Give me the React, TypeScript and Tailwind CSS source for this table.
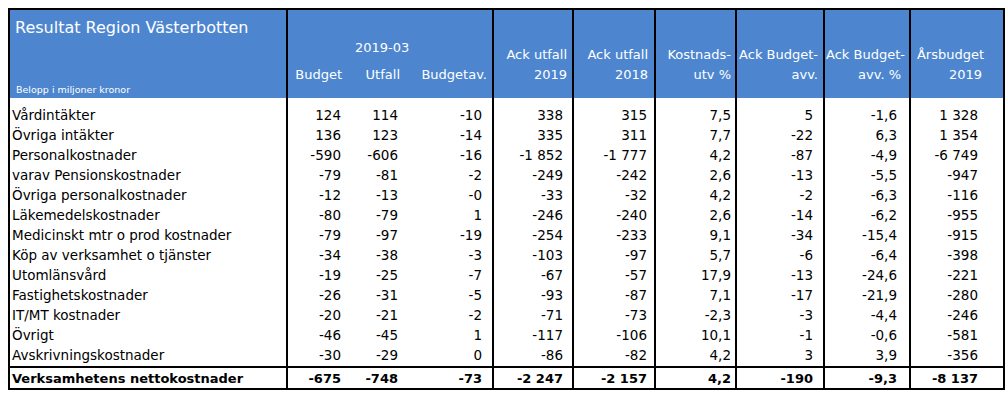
import React from "react";

const GRID =
  "grid grid-cols-[278px_58px_58px_90px_80px_82px_81px_88px_86px_92px]";

type Row = { label: string; v: string[] };

const rows: Row[] = [
  { label: "Vårdintäkter", v: ["124", "114", "-10", "338", "315", "7,5", "5", "-1,6", "1 328"] },
  { label: "Övriga intäkter", v: ["136", "123", "-14", "335", "311", "7,7", "-22", "6,3", "1 354"] },
  { label: "Personalkostnader", v: ["-590", "-606", "-16", "-1 852", "-1 777", "4,2", "-87", "-4,9", "-6 749"] },
  { label: "varav Pensionskostnader", v: ["-79", "-81", "-2", "-249", "-242", "2,6", "-13", "-5,5", "-947"] },
  { label: "Övriga personalkostnader", v: ["-12", "-13", "-0", "-33", "-32", "4,2", "-2", "-6,3", "-116"] },
  { label: "Läkemedelskostnader", v: ["-80", "-79", "1", "-246", "-240", "2,6", "-14", "-6,2", "-955"] },
  { label: "Medicinskt mtr o prod kostnader", v: ["-79", "-97", "-19", "-254", "-233", "9,1", "-34", "-15,4", "-915"] },
  { label: "Köp av verksamhet o tjänster", v: ["-34", "-38", "-3", "-103", "-97", "5,7", "-6", "-6,4", "-398"] },
  { label: "Utomlänsvård", v: ["-19", "-25", "-7", "-67", "-57", "17,9", "-13", "-24,6", "-221"] },
  { label: "Fastighetskostnader", v: ["-26", "-31", "-5", "-93", "-87", "7,1", "-17", "-21,9", "-280"] },
  { label: "IT/MT kostnader", v: ["-20", "-21", "-2", "-71", "-73", "-2,3", "-3", "-4,4", "-246"] },
  { label: "Övrigt", v: ["-46", "-45", "1", "-117", "-106", "10,1", "-1", "-0,6", "-581"] },
  { label: "Avskrivningskostnader", v: ["-30", "-29", "0", "-86", "-82", "4,2", "3", "3,9", "-356"] },
];

const total: Row = {
  label: "Verksamhetens nettokostnader",
  v: ["-675", "-748", "-73", "-2 247", "-2 157", "4,2", "-190", "-9,3", "-8 137"],
};

const cellCls = [
  "pr-[5px]",
  "pr-[6px]",
  "pr-[10px] border-r-2 border-black",
  "pr-[9px] border-r-2 border-black",
  "pr-[7px] border-r-2 border-black",
  "pr-[4px] border-r-2 border-black",
  "pr-[10px] border-r-2 border-black",
  "pr-[12px] border-r-2 border-black",
  "pr-[25px]",
];

const nb = (s: string) => s.replace(/ /g, "\u00a0");

function DataRow({ row, bold }: { row: Row; bold?: boolean }) {
  return (
    <div
      className={`${GRID} h-[20px] leading-[21px] ${bold ? "font-bold text-[13px]" : ""}`}
    >
      <div className="pl-[2px] border-r-2 border-black whitespace-nowrap">{row.label}</div>
      {row.v.map((v, i) => (
        <div key={i} className={`text-right whitespace-nowrap ${cellCls[i]}`}>
          {nb(v)}
        </div>
      ))}
    </div>
  );
}

function Spacer({ h }: { h: string }) {
  return (
    <div className={`${GRID} ${h}`}>
      <div className="border-r-2 border-black" />
      <div />
      <div />
      <div className="border-r-2 border-black" />
      <div className="border-r-2 border-black" />
      <div className="border-r-2 border-black" />
      <div className="border-r-2 border-black" />
      <div className="border-r-2 border-black" />
      <div className="border-r-2 border-black" />
      <div />
    </div>
  );
}

function TwoLine({ a, b, pr }: { a: string; b: string; pr: string }) {
  return (
    <div
      className={`border-r-2 border-black flex flex-col justify-end pb-[13px] text-right whitespace-nowrap leading-[20px] ${pr}`}
    >
      <div>{a}</div>
      <div>{b}</div>
    </div>
  );
}

export default function App() {
  return (
    <div
      className="bg-white w-[1008px] h-[401px] pl-[8px] pt-[8px] text-black text-[13.5px]"
      style={{ fontFamily: '"DejaVu Sans", Verdana, sans-serif' }}
    >
      <div className="w-[997px] border-2 border-black">
        {/* Header */}
        <div className={`${GRID} h-[88px] bg-[#4d86cf] text-white text-[13px]`}>
          <div className="border-r-2 border-black flex flex-col justify-between pl-[5px] pt-[9px] pb-[2px]">
            <div className="text-[16px] leading-[18px] whitespace-nowrap">
              Resultat Region Västerbotten
            </div>
            <div className="text-[9.5px] leading-[12px] pl-[1px] whitespace-nowrap">
              Belopp i miljoner kronor
            </div>
          </div>
          <div className="col-span-3 border-r-2 border-black flex flex-col justify-end pb-[13px] leading-[20px]">
            <div className="pl-[67px] mb-[7px] whitespace-nowrap">2019-03</div>
            <div className="grid grid-cols-[58px_58px_88px] text-right whitespace-nowrap">
              <div className="pr-[4px]">Budget</div>
              <div className="pr-[4px]">Utfall</div>
              <div className="pr-[5px]">Budgetav.</div>
            </div>
          </div>
          <TwoLine a="Ack utfall" b="2019" pr="pr-[5px]" />
          <TwoLine a="Ack utfall" b="2018" pr="pr-[6px]" />
          <TwoLine a="Kostnads-" b="utv %" pr="pr-[4px]" />
          <TwoLine a="Ack Budget-" b="avv." pr="pr-[5px]" />
          <div className="border-r-2 border-black flex flex-col justify-end pb-[13px] whitespace-nowrap leading-[20px]">
            <div className="pl-[1px]">Ack Budget-</div>
            <div className="text-right pr-[8px]">avv. %</div>
          </div>
          <div className="flex flex-col justify-end pb-[13px] text-right whitespace-nowrap leading-[20px] pr-[19px]">
            <div>Årsbudget</div>
            <div className="pr-[2px]">2019</div>
          </div>
        </div>

        {/* Body */}
        <Spacer h="h-[7px]" />
        {rows.map((r) => (
          <DataRow key={r.label} row={r} />
        ))}
        <Spacer h="h-[1px]" />
        <div className="border-t-2 border-black">
          <DataRow row={total} bold />
        </div>
      </div>
    </div>
  );
}
